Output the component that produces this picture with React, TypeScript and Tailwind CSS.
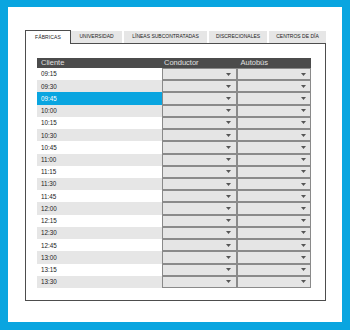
import React from "react";

const times = [
  "09:15","09:30","09:45","10:00","10:15","10:30","10:45","11:00","11:15",
  "11:30","11:45","12:00","12:15","12:30","12:45","13:00","13:15","13:30",
];

function Arrow() {
  return (
    <svg width="5" height="3" viewBox="0 0 5 3" className="block">
      <polygon points="0,0 5,0 2.5,3" fill="#555555" />
    </svg>
  );
}

function SelectCell({ arrowRight }: { arrowRight: string }) {
  return (
    <div className="h-full bg-[#e5e5e5] border border-[#8a8a8a] flex items-center justify-end">
      <div className={arrowRight}>
        <Arrow />
      </div>
    </div>
  );
}

export default function App() {
  return (
    <div
      className="w-[350px] h-[330px] bg-[#09a5e0] pt-[7px] pl-[8px] pr-[8px] pb-[8px]"
      style={{ fontFamily: '"Liberation Sans", Arial, sans-serif' }}
    >
      <div className="w-[334px] h-[315px] bg-white pl-[17px] pt-[23px]">
        {/* tabs */}
        <div className="flex items-end w-[301px] h-[13px]">
          <div className="relative z-10 w-[46px] h-[14px] -mb-[1px] bg-white border border-b-0 border-[#4d4d4d] flex items-center justify-center text-[5px] text-[#222] tracking-[0.1px]">
            FÁBRICAS
          </div>
          <div className="w-[51px] h-[12px] bg-[#e6e6e6] flex items-center justify-center text-[5px] text-[#222] mr-[2px]">
            UNIVERSIDAD
          </div>
          <div className="w-[83px] h-[12px] bg-[#e6e6e6] flex items-center justify-center text-[5px] text-[#222] mr-[2px]">
            LÍNEAS SUBCONTRATADAS
          </div>
          <div className="w-[58px] h-[12px] bg-[#e6e6e6] flex items-center justify-center text-[5px] text-[#222] mr-[2px]">
            DISCRECIONALES
          </div>
          <div className="w-[57px] h-[12px] bg-[#e6e6e6] flex items-center justify-center text-[5px] text-[#222]">
            CENTROS DE DÍA
          </div>
        </div>
        {/* panel */}
        <div className="w-[301px] h-[258px] border border-[#4d4d4d] pt-[14px] pl-[11px]">
          <div className="w-[274px]">
            <div className="flex h-[10px] bg-[#4b4b4b] text-[7.5px] text-[#e0e0e0] items-center">
              <div className="w-[125px] pl-[4px]">Cliente</div>
              <div className="w-[75px] pl-[2px]">Conductor</div>
              <div className="w-[74px] pl-[3.5px]">Autobús</div>
            </div>
            <div className="grid grid-rows-[repeat(18,1fr)] h-[220px]">
              {times.map((t, i) => {
                const selected = i === 2;
                const bg = selected
                  ? "bg-[#09a5e0] text-white"
                  : i % 2 === 1
                  ? "bg-[#e6e6e6] text-[#222]"
                  : "bg-white text-[#222]";
                return (
                  <div key={t} className="flex h-full">
                    <div className={`w-[125px] pl-[4px] flex items-center text-[6.3px] ${bg}`}>
                      {t}
                    </div>
                    <div className="w-[75px] h-full">
                      <SelectCell arrowRight="mr-[5px]" />
                    </div>
                    <div className="w-[74px] h-full">
                      <SelectCell arrowRight="mr-[4px]" />
                    </div>
                  </div>
                );
              })}
            </div>
          </div>
        </div>
      </div>
    </div>
  );
}
